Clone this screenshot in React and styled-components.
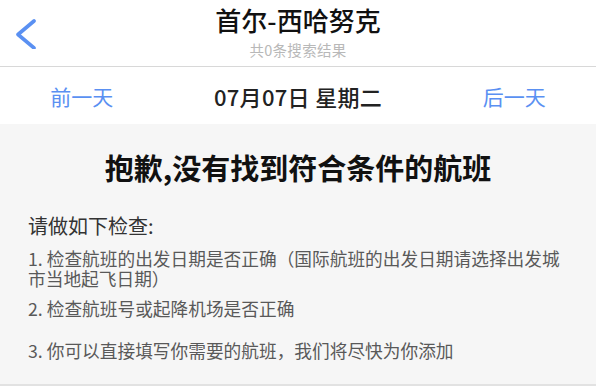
import React from "react";
import styled, { createGlobalStyle } from "styled-components";

const GlobalStyle = createGlobalStyle`
    html, body {
        margin: 0;
        padding: 0;
        background: #ffffff;
    }
    body {
        font-family: "Noto Sans CJK SC", "Noto Sans", sans-serif;
        color: #222;
    }
    * {
        box-sizing: border-box;
    }
`;

const Page = styled.div`
    width: 596px;
    height: 386px;
    display: flex;
    flex-direction: column;
    overflow: hidden;
`;

const NavBar = styled.header`
    height: 67px;
    display: grid;
    grid-template-columns: 60px 1fr 60px;
    border-bottom: 1.5px solid #d8d8d8;
    background: #fff;
`;

const BackButton = styled.button`
    align-self: start;
    margin: 17px 0 0 15px;
    padding: 0;
    border: none;
    background: none;
    width: 22px;
    height: 32px;
    display: flex;
`;

const TitleBlock = styled.div`
    display: flex;
    flex-direction: column;
    align-items: center;
    padding-top: 5px;
`;

const Title = styled.h1`
    margin: 0;
    font-size: 26px;
    line-height: 30px;
    font-weight: 500;
    color: #111;
`;

const SubTitle = styled.div`
    font-size: 14.5px;
    line-height: 18px;
    color: #b8b8b8;
    margin-top: 6px;
    letter-spacing: 0.3px;
`;

const DateBar = styled.div`
    height: 57px;
    display: flex;
    align-items: center;
    justify-content: space-around;
    background: #fff;
`;

const DayLink = styled.a`
    font-size: 21px;
    color: #5a90f2;
    cursor: pointer;
`;

const CurrentDate = styled.div`
    font-size: 22px;
    font-weight: 500;
    color: #222;
    letter-spacing: 0.3px;
`;

const Main = styled.main`
    flex: 1;
    background: #f6f6f6;
    padding: 0 28px;
    border-bottom: 2px solid #e2e2e2;
`;

const Notice = styled.h2`
    margin: 24px 0 0;
    text-align: center;
    font-size: 29px;
    line-height: 38px;
    font-weight: 700;
    color: #111;
`;

const CheckTitle = styled.div`
    margin-top: 26px;
    font-size: 20px;
    line-height: 28px;
    color: #333;
`;

const CheckList = styled.ol`
    list-style: none;
    margin: 8px 0 0;
    padding: 0;
`;

const CheckItem = styled.li`
    font-size: 17.7px;
    line-height: 20px;
    color: #595959;
    margin-top: ${props => props.gap || 0}px;
`;

const ChevronLeft = () => (
    <svg width="22" height="32" viewBox="0 0 22 32">
        <polyline
            points="19,4 3,17.5 19,31"
            fill="none"
            stroke="#5a90f2"
            strokeWidth="3.6"
            strokeLinecap="round"
            strokeLinejoin="round"
        />
    </svg>
);

const checks = [
    { text: "1. 检查航班的出发日期是否正确（国际航班的出发日期请选择出发城市当地起飞日期）", gap: 0 },
    { text: "2. 检查航班号或起降机场是否正确", gap: 10 },
    { text: "3. 你可以直接填写你需要的航班，我们将尽快为你添加", gap: 22 }
];

const App = () => (
    <>
        <GlobalStyle/>
        <Page>
            <NavBar>
                <BackButton aria-label="返回">
                    <ChevronLeft/>
                </BackButton>
                <TitleBlock>
                    <Title>首尔-西哈努克</Title>
                    <SubTitle>共0条搜索结果</SubTitle>
                </TitleBlock>
                <div/>
            </NavBar>

            <DateBar>
                <DayLink>前一天</DayLink>
                <CurrentDate>07月07日 星期二</CurrentDate>
                <DayLink>后一天</DayLink>
            </DateBar>

            <Main>
                <Notice>抱歉,没有找到符合条件的航班</Notice>
                <CheckTitle>请做如下检查:</CheckTitle>
                <CheckList>
                    {checks.map(item => (
                        <CheckItem key={item.text} gap={item.gap}>{item.text}</CheckItem>
                    ))}
                </CheckList>
            </Main>
        </Page>
    </>
);

export default App;
